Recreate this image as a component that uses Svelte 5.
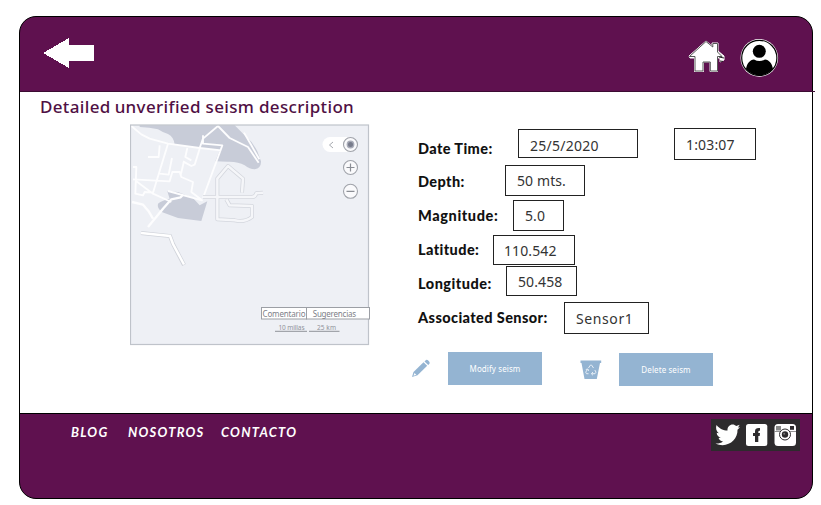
<script>
  const fields = [
    { id: 'date', label: 'Date Time:', value: '25/5/2020', extra: '1:03:07' },
    { id: 'depth', label: 'Depth:', value: '50 mts.' },
    { id: 'magnitude', label: 'Magnitude:', value: '5.0' },
    { id: 'latitude', label: 'Latitude:', value: '110.542' },
    { id: 'longitude', label: 'Longitude:', value: '50.458' },
    { id: 'sensor', label: 'Associated Sensor:', value: 'Sensor1' }
  ];
  const links = ['BLOG', 'NOSOTROS', 'CONTACTO'];
</script>

<div class="page">
  <div class="frame">
    <header>
      <svg class="back" width="54" height="32" viewBox="42 37 54 32" shape-rendering="crispEdges">
        <path d="M43 53L69 38V45H94V61H69V68Z" fill="#fff" />
      </svg>
      <div class="tools">
        <svg width="38" height="34" viewBox="688 40 38 34">
          <path d="M689 56L706 41L712 46V43H718V51L724 56V60L720 62V58H717.500V71.500H710V62H703.500V71.500H694.500V58H690Z" fill="#fff" stroke="#fff" stroke-width="1" />
          <path d="M689.500 56.500L706 41.500L712.800 47V43.500H717.500V52L722 56.500H717.500V71H710.300V62H703V71H695V56.500Z" fill="#fff" stroke="#444" stroke-width="0.900" />
          <path d="M719 57L724 58M720 61L723 61.500" stroke="#222" stroke-width="1" fill="none" />
        </svg>
        <svg width="40" height="40" viewBox="739 38 40 40">
          <clipPath id="disc"><circle cx="759.300" cy="57.900" r="17.500" /></clipPath>
          <circle cx="759.300" cy="57.900" r="18.800" fill="#fff" />
          <circle cx="759.300" cy="57.900" r="17.600" fill="#fff" stroke="#000" stroke-width="1.200" />
          <circle cx="759.300" cy="51.300" r="6.500" />
          <path clip-path="url(#disc)" d="M746 80V69C747 63 750 60 754 59.500Q759.500 62.500 765 59.500C769 60 772 63 773 69V80Z" />
        </svg>
      </div>
    </header>

    <main>
      <h1><span>Detailed</span> <span class="rest">unverified seism description</span></h1>
      <div class="content">
        <svg class="map" width="242" height="222" viewBox="130 124 242 222">
          <rect x="130.500" y="125" width="238" height="219.500" fill="#eef0f5" />
          <g transform="translate(128 122) scale(.3333)" fill="none" stroke-linejoin="round">
            <g fill="#c8ccd8">
              <path d="M35 10H320Q335 25 352 42Q375 60 388 88L399 118Q400 138 380 142Q365 142 350 130Q330 118 300 119L262 118L275 85L215 78L140 68Q138 45 120 36Q105 32 90 22Q65 16 35 15Z" />
              <path d="M118 208L150 210L195 228L215 250L238 238L220 297L150 288L103 271Q86 258 90 245Q100 236 125 230Z" />
            </g>
            <g stroke="#fdfdfe" stroke-width="5.500">
              <path d="M10 12L40 37L65 50L120 65L215 78L280 85M215 78L225 50L270 12L305 48L360 75L392 122M225 40V65L283 70L225 228" />
              <path d="M348 32L370 70L394 112M120 65L75 212M95 70L92 105H60M132 108L122 158L95 155M178 78L172 105L190 115M165 118L190 132L200 128L215 80" />
              <path d="M15 172L125 178L133 150H155L160 165L195 180L190 210L222 235L120 207M168 118L158 160M15 135H25L22 215L45 220L50 210L75 212M25 178L75 215L130 240" />
              <path d="M60 315L105 260L130 232L158 226L165 218M12 240L45 248L62 268L75 290" stroke-width="7" />
            </g>
            <g stroke="#d3d6dd" stroke-width="12">
              <path d="M225 225H372Q382 225 385 214L405 212M342 212L345 170L300 132L268 170V292L320 295Q350 302 372 285V252L305 250L295 232" />
            </g>
            <g stroke="#f5f6f9" stroke-width="7.500">
              <path d="M225 225H372Q382 225 385 214L405 212" />
              <path d="M342 212L345 170L300 132L268 170V292L320 295Q350 302 372 285V252L305 250L295 232" />
            </g>
          </g>
          <path d="M141 233L170 236L173 244L184 265" fill="none" stroke="#d0d3da" stroke-width="4" />
          <path d="M141 233L170 236L173 244L184 264.500" fill="none" stroke="#fff" stroke-width="2.500" />
          <rect x="130.500" y="125" width="238" height="219.500" fill="none" stroke="#bfc3ca" stroke-width="1.200" />
          <rect x="322.500" y="137" width="34" height="15" rx="7.500" fill="#fff" />
          <path d="M333 142L329.500 145L333 148" fill="none" stroke="#a6a9af" />
          <g fill="#fafafc" stroke="#a0a3aa" stroke-width="1.100">
            <circle cx="350.500" cy="144.500" r="7" />
            <circle cx="350.500" cy="167.500" r="7" />
            <circle cx="350.500" cy="191.300" r="7" />
          </g>
          <circle cx="350.500" cy="144.500" r="3.900" fill="#a9acb8" />
          <circle cx="350.500" cy="144.500" r="2.500" fill="#777b8b" />
          <path d="M346.500 167.500H354.500M350.500 163.500V171.500M346.500 191.300H354.500" stroke="#8b8e95" stroke-width="1.200" />
          <g fill="#fff" stroke="#9c9fa5">
            <rect x="261.500" y="307.500" width="45" height="11.500" />
            <rect x="306.500" y="307.500" width="63" height="11.500" />
          </g>
          <g font-family="'Noto Sans', sans-serif" fill="#7d8087">
            <text x="262.500" y="317" font-size="8" textLength="43">Comentario</text>
            <text x="312.700" y="317" font-size="8" textLength="43.500">Sugerencias</text>
            <text x="278.500" y="329.500" font-size="6.500" textLength="26" fill="#90939b">10 millas</text>
            <text x="317" y="329.500" font-size="6.500" textLength="19" fill="#90939b">25 km</text>
          </g>
          <path d="M275 331.300H307M309 331.300H339.500" stroke="#a2a5ab" stroke-width="1.300" />
        </svg>

        <section>
          {#each fields as field}
            <div class="row {field.id}">
              <span class="label">{field.label}</span>
              <span class="value">{field.value}</span>
              {#if field.extra}<span class="value time">{field.extra}</span>{/if}
            </div>
          {/each}
          <div class="actions">
            <svg class="pencil" width="20" height="20" viewBox="411 359 20 20" fill="#94b4d2">
              <path d="M412 377L413.500 372L423.500 362.300L427.200 365.800L417.500 375.200Z" />
              <path d="M424.500 361.400L426 360Q427.200 359.500 428.500 360.800Q430.300 362.500 429.500 363.700L428.200 364.900Z" />
              <path d="M413.500 375.700L414.500 373L416.300 374.700Z" fill="#fff" />
            </svg>
            <button class="modify">Modify seism</button>
            <svg class="bin" width="22" height="20" viewBox="580 360 22 20">
              <path d="M580.500 360.500H601.200V363H600L596.800 379H584.500L581.500 363H580.500Z" fill="#94b4d2" />
              <path d="M588.500 368L590.300 365.200H591.700L593.500 368M594.800 370L596 372.200L595 373.700H591.700M593 372L591.300 373.700L593 375.300M588.500 373.700H586.500L585.700 372.200L587.500 369.300M585.800 369.500L588 369L588.500 371" fill="none" stroke="#e6eef6" stroke-width="1" />
            </svg>
            <button class="delete">Delete seism</button>
          </div>
        </section>
      </div>
    </main>

    <footer>
      <nav>{#each links as link}<span>{link}</span>{/each}</nav>
      <svg class="social" width="89" height="32" viewBox="711 419 89 32">
        <rect x="711" y="419" width="89" height="32" fill="#2d2b2d" />
        <path d="M716.500 425C720 429 723 430.500 727.500 430.500C727 425 733 422.500 736.300 426L739.700 424.800L738 427.500L740 427.200L737.500 429.800C738 440 727 449 715.500 443.500C719 443.600 721 443 723 441.400C720.500 441 719.200 439.700 718.600 438L720.800 437.800C718.200 437 716.800 435 716.700 432.700L718.800 433.300C716.200 431 715.500 428 716.500 425Z" fill="#fff" />
        <rect x="746" y="424" width="21.300" height="22" rx="2.500" fill="#fff" />
        <path d="M755 442V436H753V433H755V431.500C755 428.300 757 427.700 760 428V430.800C758.600 430.700 758.300 431 758.300 433H760L759.700 436H758.300V442Z" fill="#2d2b2d" />
        <rect x="774.500" y="424" width="21.500" height="22" rx="3.500" fill="#fff" />
        <path d="M774.500 431.500H796" stroke="#777" stroke-width="0.800" />
        <rect x="776" y="426" width="5" height="4.500" fill="#888" />
        <rect x="790" y="426" width="4" height="3.800" fill="#2d2b2d" />
        <circle cx="785" cy="434.500" r="5.500" fill="#fff" stroke="#2d2b2d" />
        <circle cx="785" cy="434.500" r="3.200" fill="#2d2b2d" />
        <circle cx="784.200" cy="433.700" r="1" fill="#777" />
      </svg>
    </footer>
  </div>
</div>

<style>
  :global(body) { background: #fff; }
  .page { width: 821px; height: 505px; box-sizing: border-box; padding: 16px 0 0 19px; }
  .frame { width: 794px; height: 483px; box-sizing: border-box; border: 1px solid #000; border-radius: 17px; background: #5f114f; display: flex; flex-direction: column; }
  header { height: 75px; flex: none; display: flex; justify-content: space-between; box-sizing: border-box; padding: 20px 33px 0 22px; position: relative; }
  header::after { content: ''; position: absolute; left: 0; right: -3px; bottom: 0; height: 1px; background: #3c0b32; }
  .tools { display: flex; gap: 13px; }
  .tools svg { margin-top: 1px; }
  .tools svg:first-child { margin-top: 3px; }
  main { height: 321px; background: #fff; flex: none; }
  h1 { margin: 0; padding-left: 20px; height: 32px; font: 500 17px/30px 'Noto Sans', sans-serif; color: #501044; white-space: nowrap; display: flex; letter-spacing: 0.34px; }
  h1 .rest { margin-left: 4px; }
  .content { display: flex; }
  .map { margin-left: 110px; display: block; flex: none; }
  section { margin: 7px 0 0 46px; width: 350px; }
  .row { height: 34px; display: flex; align-items: flex-start; }
  .label { font: 900 14.5px/34px Lato, sans-serif; letter-spacing: 0.4px; color: #111; white-space: nowrap; width: 75px; flex: none; }
  .value { box-sizing: border-box; flex: none; border: 1px solid #222; background: #fff; height: 31px; padding-left: 11px; font: 400 14px/30px 'Noto Sans', sans-serif; letter-spacing: 0.1px; color: #333; white-space: nowrap; }
  .date .label { width: 100px; }
  .date .value { width: 120px; height: 29px; margin-top: -2px; line-height: 31px; letter-spacing: 0.25px; }
  .date .time { margin: -3px 0 0 36px; width: 82px; height: 32px; line-height: 31px; letter-spacing: 0.15px; }
  .date .label { line-height: 35px; }
  .depth .label { width: 87px; }
  .depth .value { width: 80px; }
  .magnitude .label { width: 95px; letter-spacing: 0.6px; }
  .magnitude .value { width: 51px; margin-top: 1px; }
  .latitude .value { width: 82px; height: 30px; margin-top: 2px; padding-left: 10px; }
  .longitude .label { width: 88px; letter-spacing: 0.5px; }
  .longitude .value { width: 71px; height: 30px; margin-top: -1px; }
  .sensor .label { width: 146px; }
  .sensor .value { width: 85px; height: 32px; margin-top: 1px; line-height: 31px; letter-spacing: 0.6px; }
  .actions { display: flex; align-items: flex-start; margin: 17px 0 0 -7px; }
  .pencil { margin-top: 7px; }
  .bin { margin: 8px 0 0 38px; }
  button { width: 94px; height: 33px; border: 0; padding: 0; background: #94b4d2; color: #fff; font: 8px 'Noto Sans', sans-serif; letter-spacing: 0.1px; }
  .modify { margin-left: 17px; }
  .delete { margin: 1px 0 0 17px; }
  footer { flex: 1; border-top: 1px solid #000; display: flex; justify-content: space-between; padding: 5px 12px 0 51px; }
  nav { display: flex; font: italic 700 13px/26px Lato, sans-serif; letter-spacing: 1.25px; color: #fff; }
  nav span:nth-child(1) { width: 57px; }
  nav span:nth-child(2) { width: 93px; }
</style>
